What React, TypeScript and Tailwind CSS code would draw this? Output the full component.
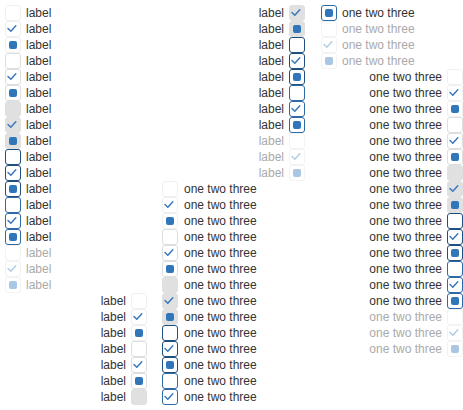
type Variant = 'normal' | 'hover' | 'active' | 'focus' | 'focusHover' | 'disabled'
type Value = 'off' | 'on' | 'mixed'

const variants: Variant[] = ['normal', 'hover', 'active', 'focus', 'focusHover', 'disabled']
const values: Value[] = ['off', 'on', 'mixed']

const rows = variants.flatMap((variant) => values.map((value) => ({ variant, value })))

const boxStyles: Record<Variant, string> = {
  normal: 'border border-[#f0f0f0] bg-white',
  hover: 'border border-[#dedede] bg-white',
  active: 'border border-[#e0e0e0] bg-[#e0e0e0]',
  focus: 'border border-[#1f4f7f] bg-white',
  focusHover: 'border border-[#2d6aa6] bg-white',
  disabled: 'border border-[#f3f3f3] bg-white',
}

function Box({ variant, value }: { variant: Variant; value: Value }) {
  const disabled = variant === 'disabled'
  return (
    <div className={`relative h-4 w-4 shrink-0 rounded-[3px] ${boxStyles[variant]}`}>
      {value === 'on' && (
        <svg viewBox="0 0 16 16" className="absolute -left-px -top-px h-4 w-4">
          <polyline
            points="3,7.5 5.8,10.2 10.8,4.8"
            fill="none"
            stroke={disabled ? '#b3cde6' : '#3a79bd'}
            strokeWidth="1.5"
            strokeLinecap="round"
            strokeLinejoin="round"
          />
        </svg>
      )}
      {value === 'mixed' && (
        <div
          className={`absolute left-[3px] top-[3px] h-2 w-2 rounded-[2px] ${disabled ? 'bg-[#a9c7e3]' : 'bg-[#3276ba]'}`}
        />
      )}
    </div>
  )
}

function Column({
  text,
  labelFirst,
  from = 0,
  to = 18,
  align = 'start',
  gap = 'gap-[5px]',
}: {
  text: string
  labelFirst?: boolean
  from?: number
  to?: number
  align?: 'start' | 'end'
  gap?: string
}) {
  return (
    <div className={`flex flex-col ${align === 'end' ? 'items-end' : 'items-start'}`}>
      {rows.slice(from, to).map((r, i) => {
        const label = (
          <span className={`whitespace-nowrap ${r.variant === 'disabled' ? 'text-[#aaaaaa]' : 'text-[#333333]'}`}>
            {text}
          </span>
        )
        return (
          <div key={i} className={`flex h-4 items-center ${gap}`}>
            {labelFirst && label}
            <Box variant={r.variant} value={r.value} />
            {!labelFirst && label}
          </div>
        )
      })}
    </div>
  )
}

export default function App() {
  return (
    <div
      className="h-[410px] w-[463px] overflow-hidden bg-white text-[12px] leading-4"
      style={{ fontFamily: '"Liberation Sans", Arial, sans-serif' }}
    >
      <div className="flex items-start">
        {/* label right, box left */}
        <div className="ml-[5px] mt-[5px] w-[47px]">
          <Column text="label" />
        </div>

        {/* label left, box right */}
        <div className="mt-[293px] w-[95px]">
          <Column text="label" labelFirst align="end" to={7} />
        </div>

        <div className="ml-[15px] mt-[181px] w-[97px]">
          <Column text="one two three" gap="gap-[6px]" to={14} />
        </div>

        <div className="mt-[5px] w-[46px]">
          <Column text="label" labelFirst align="end" from={7} />
        </div>

        <div className="ml-[16px] mt-[5px] flex flex-1 flex-col">
          <Column text="one two three" from={14} />
          <Column text="one two three" labelFirst align="end" />
        </div>
      </div>
    </div>
  )
}
